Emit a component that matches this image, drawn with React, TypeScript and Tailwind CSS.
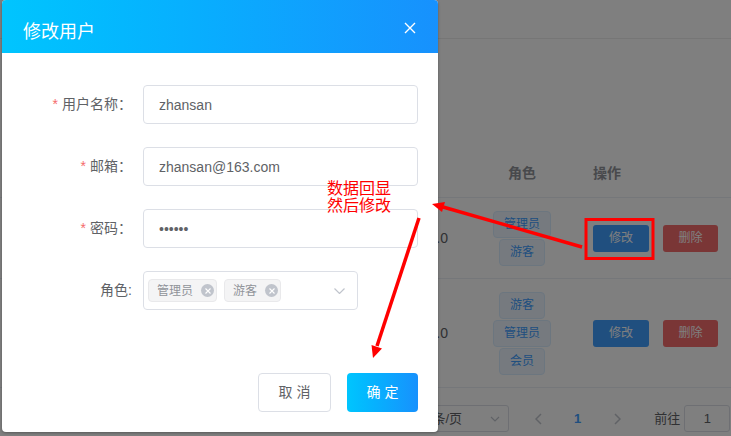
export default function App() {
  return (
    <main className="relative h-[436px] w-[731px] overflow-hidden bg-white font-['Liberation_Sans','Noto_Sans_CJK_SC',sans-serif] text-[14px] text-[#606266]">
      {/* page behind the dialog */}
      <div className="h-[39px] border-b border-[#ececec]" />
      <div className="h-[111px]" />

      <div className="flex h-[48px] items-center border-b border-[#ebeef5] font-bold text-[#909399]">
        <div className="w-[470px]" />
        <div className="flex w-[104px] justify-center">角色</div>
        <div className="pl-[19px]">操作</div>
      </div>

      <div className="flex h-[81px] items-center border-b border-[#ebeef5]">
        <div className="flex w-[470px] justify-end pr-[22px]">1.0</div>
        <div className="flex w-[104px] flex-col items-center gap-px">
          <span className="flex h-[27px] items-center rounded-[4px] border border-[#d9ecff] bg-[#ecf5ff] px-[10px] text-[12px] text-[#409eff]">管理员</span>
          <span className="flex h-[27px] items-center rounded-[4px] border border-[#d9ecff] bg-[#ecf5ff] px-[10px] text-[12px] text-[#409eff]">游客</span>
        </div>
        <div className="flex gap-[14px] pl-[19px]">
          <button className="h-[27px] w-[56px] rounded-[3px] bg-[#409eff] text-[12px] text-white">修改</button>
          <button className="h-[27px] w-[55px] rounded-[3px] bg-[#f56c6c] text-[12px] text-white">删除</button>
        </div>
      </div>

      <div className="flex h-[109px] items-center border-b border-[#ebeef5]">
        <div className="flex w-[470px] justify-end pr-[22px]">1.0</div>
        <div className="flex w-[104px] flex-col items-center gap-px">
          <span className="flex h-[27px] items-center rounded-[4px] border border-[#d9ecff] bg-[#ecf5ff] px-[10px] text-[12px] text-[#409eff]">游客</span>
          <span className="flex h-[27px] items-center rounded-[4px] border border-[#d9ecff] bg-[#ecf5ff] px-[10px] text-[12px] text-[#409eff]">管理员</span>
          <span className="flex h-[27px] items-center rounded-[4px] border border-[#d9ecff] bg-[#ecf5ff] px-[10px] text-[12px] text-[#409eff]">会员</span>
        </div>
        <div className="flex gap-[14px] pl-[19px]">
          <button className="h-[27px] w-[56px] rounded-[3px] bg-[#409eff] text-[12px] text-white">修改</button>
          <button className="h-[27px] w-[55px] rounded-[3px] bg-[#f56c6c] text-[12px] text-white">删除</button>
        </div>
      </div>

      <div className="mt-[17px] flex h-[27px] items-center text-[13px]">
        <div className="ml-[409px] flex h-[27px] w-[100px] items-center justify-between rounded-[3px] border border-[#dcdfe6] pl-[8px] pr-[8px]">
          <span>10条/页</span>
          <svg width="10" height="6" viewBox="0 0 10 6" fill="none" stroke="#c0c4cc" strokeWidth="1.2">
            <path d="M1 1l4 4 4-4" />
          </svg>
        </div>
        <svg className="ml-[26px]" width="7" height="12" viewBox="0 0 7 12" fill="none" stroke="#c0c4cc" strokeWidth="1.5">
          <path d="M6 1L1 6l5 5" />
        </svg>
        <span className="ml-[32px] font-bold text-[#409eff]">1</span>
        <svg className="ml-[33px]" width="7" height="12" viewBox="0 0 7 12" fill="none" stroke="#c0c4cc" strokeWidth="1.5">
          <path d="M1 1l5 5-5 5" />
        </svg>
        <span className="ml-[33px]">前往</span>
        <div className="ml-[4px] flex h-[27px] w-[46px] items-center justify-center rounded-[3px] border border-[#dcdfe6]">1</div>
      </div>

      {/* dim layer */}
      <div className="absolute inset-0 bg-black/50" />

      {/* dialog */}
      <div className="absolute left-[2px] top-0 flex h-[432px] w-[436px] flex-col overflow-hidden rounded-[4px] bg-white shadow-[0_1px_3px_rgba(0,0,0,0.3)]">
        <div className="flex h-[53px] items-start justify-between bg-gradient-to-r from-[#00c5fe] to-[#1791fd] pl-[21px] pr-[22px] pt-[20px]">
          <span className="text-[18px] leading-6 text-white">修改用户</span>
          <svg className="mt-[2px]" width="12" height="12" viewBox="0 0 12 12" stroke="white" strokeWidth="1.4">
            <path d="M1 1l10 10M11 1L1 11" />
          </svg>
        </div>

        <div className="flex flex-col gap-[23px] pt-[32px]">
          <div className="flex items-center">
            <label className="w-[141px] pr-[11px] text-right">
              <span className="mr-[4px] text-[#f56c6c]">*</span>用户名称：
            </label>
            <input readOnly value="zhansan" className="h-[39px] w-[275px] rounded-[4px] border border-[#dcdfe6] px-[15px] text-[#606266] outline-none" />
          </div>
          <div className="flex items-center">
            <label className="w-[141px] pr-[11px] text-right">
              <span className="mr-[4px] text-[#f56c6c]">*</span>邮箱：
            </label>
            <input readOnly value="zhansan@163.com" className="h-[39px] w-[275px] rounded-[4px] border border-[#dcdfe6] px-[15px] text-[#606266] outline-none" />
          </div>
          <div className="flex items-center">
            <label className="w-[141px] pr-[11px] text-right">
              <span className="mr-[4px] text-[#f56c6c]">*</span>密码：
            </label>
            <input readOnly type="password" value="123456" className="h-[39px] w-[275px] rounded-[4px] border border-[#dcdfe6] px-[15px] text-[#606266] outline-none" />
          </div>
          <div className="flex items-center">
            <label className="w-[141px] pr-[11px] text-right">角色:</label>
            <div className="flex h-[39px] w-[215px] items-center rounded-[4px] border border-[#dcdfe6] pl-[4px] pr-[12px]">
              <span className="flex h-[23px] items-center rounded-[4px] border border-[#e9e9eb] bg-[#f4f4f5] pl-[8px] pr-[2px] text-[12px] text-[#909399]">
                管理员
                <span className="ml-[8px] flex h-[13px] w-[13px] items-center justify-center rounded-full bg-[#c0c4cc]">
                  <svg width="6" height="6" viewBox="0 0 6 6" stroke="white" strokeWidth="1.1">
                    <path d="M0.5 0.5l5 5M5.5 0.5l-5 5" />
                  </svg>
                </span>
              </span>
              <span className="ml-[7px] flex h-[23px] items-center rounded-[4px] border border-[#e9e9eb] bg-[#f4f4f5] pl-[8px] pr-[2px] text-[12px] text-[#909399]">
                游客
                <span className="ml-[8px] flex h-[13px] w-[13px] items-center justify-center rounded-full bg-[#c0c4cc]">
                  <svg width="6" height="6" viewBox="0 0 6 6" stroke="white" strokeWidth="1.1">
                    <path d="M0.5 0.5l5 5M5.5 0.5l-5 5" />
                  </svg>
                </span>
              </span>
              <svg className="ml-auto" width="11" height="6" viewBox="0 0 11 6" fill="none" stroke="#c0c4cc" strokeWidth="1.2">
                <path d="M0.5 0.5l5 5 5-5" />
              </svg>
            </div>
          </div>
        </div>

        <div className="mt-[63px] flex justify-end gap-[16px] pr-[20px]">
          <button className="h-[39px] w-[73px] rounded-[4px] border border-[#dcdfe6] bg-white text-[#606266]">取 消</button>
          <button className="h-[39px] w-[71px] rounded-[4px] bg-gradient-to-r from-[#00c5fe] to-[#1791fd] text-white">确 定</button>
        </div>
      </div>

      {/* red annotations */}
      <div className="absolute left-[327px] top-[179px] font-['Noto_Sans_CJK_SC',sans-serif] text-[16px] leading-[17px] text-[#ff0000]">
        <div>数据回显</div>
        <div>然后修改</div>
      </div>
      <svg className="pointer-events-none absolute inset-0" width="731" height="436" viewBox="0 0 731 436">
        <rect x="586" y="219.5" width="67" height="39" fill="none" stroke="#ff0000" strokeWidth="3" />
        <line x1="582" y1="247" x2="443" y2="207" stroke="#ff0000" strokeWidth="3.5" />
        <polygon points="432,204 445,202 442,212" fill="#ff0000" />
        <line x1="419" y1="218" x2="377" y2="346" stroke="#ff0000" strokeWidth="3.5" />
        <polygon points="373,358 371.5,345 382,348.5" fill="#ff0000" />
      </svg>
    </main>
  )
}
